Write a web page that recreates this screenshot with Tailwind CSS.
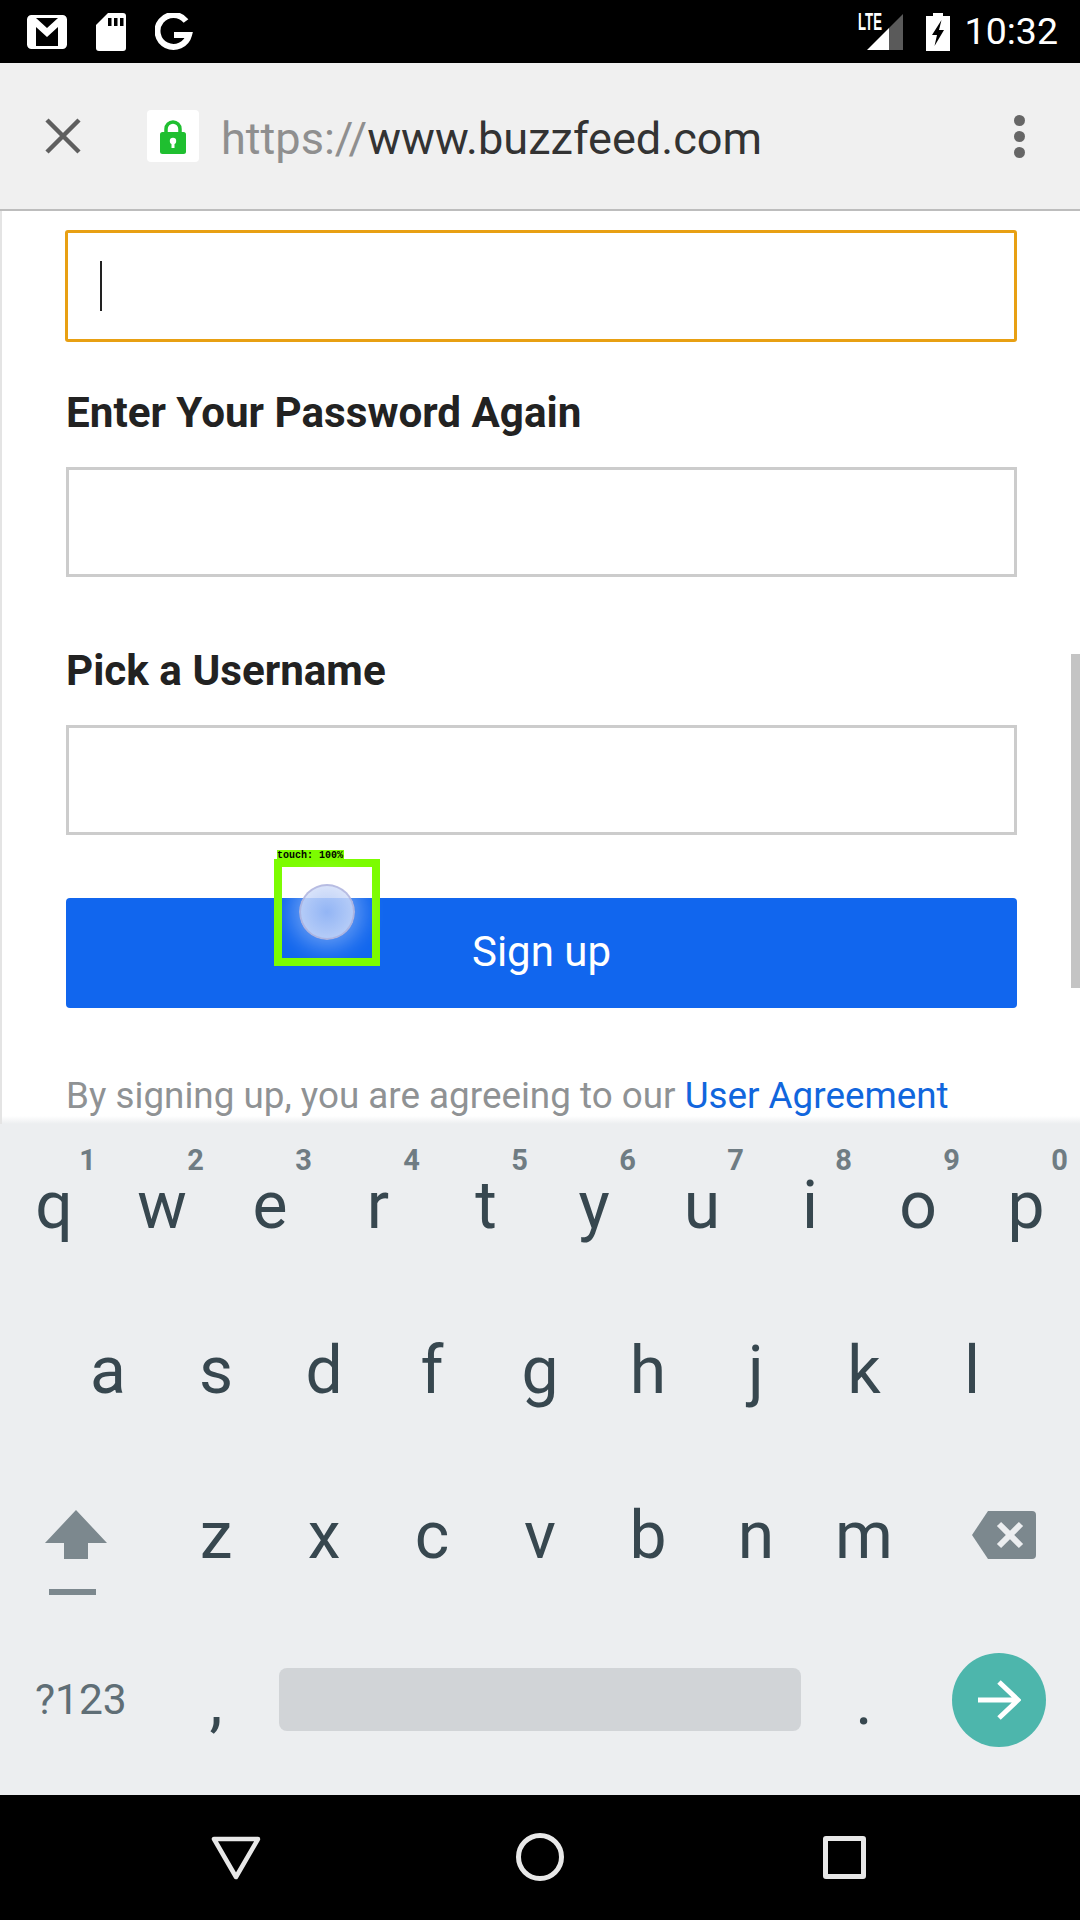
<!DOCTYPE html>
<html lang="en">
<head>
  <meta charset="UTF-8">
  <title>BuzzFeed sign up</title>
  <script src="https://cdn.jsdelivr.net/npm/@tailwindcss/browser@4"></script>
</head>
<body class="bg-black font-['Roboto',sans-serif]">
  <div class="relative w-[1080px] h-[1920px] overflow-hidden flex flex-col">

    <!-- status bar -->
    <div class="h-[63px] bg-black flex items-center text-white shrink-0">
      <svg class="ml-[27px] w-[40px] h-[34px]" viewBox="0 0 40 34">
        <rect x="1.500" y="1.500" width="37" height="31" rx="3" fill="#000" stroke="#fff" stroke-width="3"/>
        <path d="M3 3 H9 L20 13 L31 3 H37 V31 H31 V12 L20 22 L9 12 V31 H3 Z" fill="#fff"/>
      </svg>
      <svg class="ml-[29px] w-[30px] h-[38px]" viewBox="0 0 30 38">
        <path d="M12 0 H27 Q30 0 30 3 V35 Q30 38 27 38 H3 Q0 38 0 35 V12 Z" fill="#fff"/>
        <path d="M12 5h3.500v8H12zM18 5h3.500v8H18zM24 5h3.500v8H24z" fill="#000"/>
      </svg>
      <svg class="ml-[29px] w-[38px] h-[38px]" viewBox="0 0 38 38">
        <path d="M31 8 A16 16 0 1 0 34 22 H19" fill="none" stroke="#fff" stroke-width="6"/>
      </svg>
      <div class="relative ml-auto w-[46px] h-[38px]">
        <svg class="w-[46px] h-[38px]" viewBox="0 0 46 38">
          <path d="M9 37 L31 15 V37 Z" fill="#fff"/>
          <path d="M31 15 L45 1 V37 H31 Z" fill="#5a5a5a"/>
        </svg>
        <span class="absolute left-0 top-[-1px] text-[24px] leading-[20px] font-bold text-white scale-x-[0.55] origin-left font-['Liberation_Sans',sans-serif]">LTE</span>
      </div>
      <svg class="ml-[22px] w-[24px] h-[38px]" viewBox="0 0 24 38">
        <path d="M7 0 H17 V3 H24 V38 H0 V3 H7 Z" fill="#fff"/>
        <path d="M15.500 7 L6 22 H11 L8.500 33 L18 17 H13 Z" fill="#000"/>
      </svg>
      <span class="ml-[15px] mr-[22px] text-[37.500px] leading-none">10:32</span>
    </div>

    <!-- browser toolbar -->
    <div class="h-[148px] bg-[#f0f0f0] border-b-2 border-[#bdbdbd] flex items-center shrink-0">
      <svg class="ml-[44px] w-[38px] h-[38px]" viewBox="0 0 38 38">
        <path d="M3 3 L35 35 M35 3 L3 35" stroke="#5f5f5f" stroke-width="4.500"/>
      </svg>
      <div class="ml-[65px] w-[52px] h-[52px] bg-white rounded-[4px] flex items-center justify-center">
        <svg class="w-[28px] h-[35px]" viewBox="0 0 28 35">
          <path d="M7 14 V10 A7 7 0 0 1 21 10 V14" fill="none" stroke="#1fbf30" stroke-width="3.500"/>
          <rect x="1" y="13" width="26" height="22" rx="2.500" fill="#1fbf30"/>
          <circle cx="14" cy="22" r="3.200" fill="#fff"/>
          <rect x="12.500" y="23" width="3" height="6" fill="#fff"/>
        </svg>
      </div>
      <span class="ml-[22px] pt-[5px] text-[45.100px] leading-none text-[#333333]"><span class="text-[#8f8f8f]">https://</span>www.buzzfeed.com</span>
      <div class="ml-auto mr-[55px] flex flex-col gap-[5px]">
        <span class="w-[11px] h-[11px] rounded-full bg-[#666666]"></span>
        <span class="w-[11px] h-[11px] rounded-full bg-[#666666]"></span>
        <span class="w-[11px] h-[11px] rounded-full bg-[#666666]"></span>
      </div>
    </div>

    <!-- page content -->
    <div class="relative h-[913px] bg-white border-l-2 border-[#e4e4e4] pl-[64px] pr-[63px] pt-[19px] overflow-hidden shrink-0">
      <div class="relative h-[112px] border-[3px] border-[#e8a013] rounded-[3px] -ml-[1px]">
        <span class="absolute left-[32px] top-[28px] w-[2px] h-[50px] bg-[#222222]"></span>
      </div>
      <p class="mt-[47px] h-[47px] text-[42.200px] leading-[47px] font-bold text-[#222222]">Enter Your Password Again</p>
      <div class="mt-[31px] h-[110px] border-[3px] border-[#cccccc]"></div>
      <p class="mt-[70px] h-[47px] text-[42.200px] leading-[47px] font-bold text-[#222222]">Pick a Username</p>
      <div class="mt-[31px] h-[110px] border-[3px] border-[#cccccc]"></div>
      <button class="mt-[63px] w-full h-[110px] pb-[3px] bg-[#1166ee] rounded-[4px] text-white text-[42px]">Sign up</button>
      <p class="mt-[65px] text-[36.800px] leading-[46px] text-[#8f9294] whitespace-nowrap">By signing up, you are agreeing to our <span class="text-[#1166dd]">User Agreement</span></p>
      <span class="absolute right-0 top-[443px] w-[9px] h-[334px] bg-[#c4c4c4]"></span>
      <span class="absolute left-0 right-0 bottom-0 h-[8px] bg-gradient-to-b from-white/0 to-[#eceef0]"></span>
    </div>

    <!-- keyboard -->
    <div class="h-[671px] bg-[#eceef0] shrink-0 text-[#37474f] text-[66px] leading-none">
      <div class="h-[165px] flex">
        <div class="relative w-[108px] flex justify-center pt-[49px]">q<span class="absolute right-[12px] top-[22px] text-[29px] font-bold text-[#6f7c83]">1</span></div>
        <div class="relative w-[108px] flex justify-center pt-[49px]">w<span class="absolute right-[12px] top-[22px] text-[29px] font-bold text-[#6f7c83]">2</span></div>
        <div class="relative w-[108px] flex justify-center pt-[49px]">e<span class="absolute right-[12px] top-[22px] text-[29px] font-bold text-[#6f7c83]">3</span></div>
        <div class="relative w-[108px] flex justify-center pt-[49px]">r<span class="absolute right-[12px] top-[22px] text-[29px] font-bold text-[#6f7c83]">4</span></div>
        <div class="relative w-[108px] flex justify-center pt-[49px]">t<span class="absolute right-[12px] top-[22px] text-[29px] font-bold text-[#6f7c83]">5</span></div>
        <div class="relative w-[108px] flex justify-center pt-[49px]">y<span class="absolute right-[12px] top-[22px] text-[29px] font-bold text-[#6f7c83]">6</span></div>
        <div class="relative w-[108px] flex justify-center pt-[49px]">u<span class="absolute right-[12px] top-[22px] text-[29px] font-bold text-[#6f7c83]">7</span></div>
        <div class="relative w-[108px] flex justify-center pt-[49px]">i<span class="absolute right-[12px] top-[22px] text-[29px] font-bold text-[#6f7c83]">8</span></div>
        <div class="relative w-[108px] flex justify-center pt-[49px]">o<span class="absolute right-[12px] top-[22px] text-[29px] font-bold text-[#6f7c83]">9</span></div>
        <div class="relative w-[108px] flex justify-center pt-[49px]">p<span class="absolute right-[12px] top-[22px] text-[29px] font-bold text-[#6f7c83]">0</span></div>
      </div>
      <div class="h-[165px] flex pl-[54px]">
        <div class="w-[108px] flex justify-center pt-[49px]">a</div>
        <div class="w-[108px] flex justify-center pt-[49px]">s</div>
        <div class="w-[108px] flex justify-center pt-[49px]">d</div>
        <div class="w-[108px] flex justify-center pt-[49px]">f</div>
        <div class="w-[108px] flex justify-center pt-[49px]">g</div>
        <div class="w-[108px] flex justify-center pt-[49px]">h</div>
        <div class="w-[108px] flex justify-center pt-[49px]">j</div>
        <div class="w-[108px] flex justify-center pt-[49px]">k</div>
        <div class="w-[108px] flex justify-center pt-[49px]">l</div>
      </div>
      <div class="h-[165px] flex">
        <div class="w-[162px] pl-[44px] pt-[56px]">
          <svg class="w-[64px] h-[85px]" viewBox="0 0 64 85">
            <path d="M32 0 L63 33 H44 V49 H20 V33 H1 Z" fill="#7c888e"/>
            <rect x="5" y="79" width="47" height="6" fill="#7c888e"/>
          </svg>
        </div>
        <div class="w-[108px] flex justify-center pt-[49px]">z</div>
        <div class="w-[108px] flex justify-center pt-[49px]">x</div>
        <div class="w-[108px] flex justify-center pt-[49px]">c</div>
        <div class="w-[108px] flex justify-center pt-[49px]">v</div>
        <div class="w-[108px] flex justify-center pt-[49px]">b</div>
        <div class="w-[108px] flex justify-center pt-[49px]">n</div>
        <div class="w-[108px] flex justify-center pt-[49px]">m</div>
        <div class="w-[162px] pl-[54px] pt-[57px]">
          <svg class="w-[64px] h-[48px]" viewBox="0 0 64 48">
            <path d="M16 0 H60 Q64 0 64 4 V44 Q64 48 60 48 H16 L0 24 Z" fill="#7c888e"/>
            <path d="M27 13 L49 35 M49 13 L27 35" stroke="#eceef0" stroke-width="6"/>
          </svg>
        </div>
      </div>
      <div class="h-[176px] flex items-start">
        <div class="w-[162px] pl-[35px] pt-[60px] text-[42.500px] text-[#5f6e76]">?123</div>
        <div class="w-[108px] flex justify-center pt-[50px]">,</div>
        <div class="w-[540px] px-[9px] pt-[49px]">
          <div class="h-[63px] bg-[#d1d4d7] rounded-[8px]"></div>
        </div>
        <div class="w-[108px] flex justify-center pt-[50px]">.</div>
        <div class="w-[162px] pl-[34px] pt-[34px]">
          <div class="w-[94px] h-[94px] rounded-full bg-[#4db6ac] flex items-center justify-center">
            <svg class="w-[44px] h-[42px]" viewBox="0 0 44 42">
              <path d="M1 21 H40 M22 3 L41 21 L22 39" fill="none" stroke="#fff" stroke-width="5"/>
            </svg>
          </div>
        </div>
      </div>
    </div>

    <!-- nav bar -->
    <div class="flex-1 bg-black relative">
      <svg class="absolute left-[211px] top-[41px] w-[50px] h-[44px]" viewBox="0 0 50 44">
        <path d="M3 3 H47 L25 41 Z" fill="none" stroke="#e8e8e8" stroke-width="4.500" stroke-linejoin="round"/>
      </svg>
      <span class="absolute left-[516px] top-[38px] w-[48px] h-[48px] rounded-full border-[5px] border-[#e8e8e8]"></span>
      <span class="absolute left-[823px] top-[41px] w-[43px] h-[43px] rounded-[3px] border-[5px] border-[#e8e8e8]"></span>
    </div>

    <!-- touch marker over the page -->
    <div class="absolute left-[274px] top-[859px] w-[106px] h-[107px] border-[8px] border-[#7cfc00]">
      <span class="absolute left-[17px] top-[17px] w-[56px] h-[56px] rounded-full bg-[radial-gradient(circle,rgba(170,195,245,0.85),rgba(225,232,250,0.85))] border-2 border-[#a9add8]/70 shadow-[0_0_22px_8px_rgba(255,255,255,0.35)]"></span>
    </div>
    <span class="absolute left-[277px] top-[850px] h-[11px] w-[67px] bg-[#7cfc00] font-['Liberation_Mono',monospace] font-bold text-[10px] leading-[11px] text-black whitespace-nowrap">touch: 100%</span>
  </div>
</body>
</html>
